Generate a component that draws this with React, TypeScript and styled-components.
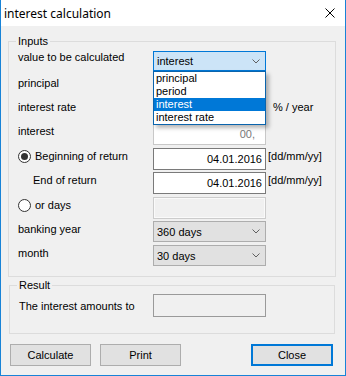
import React from "react";
import styled, { createGlobalStyle, css } from "styled-components";

const Global = createGlobalStyle`
  html, body { margin: 0; padding: 0; background: #f0f0f0; }
  body {
    font-family: "Liberation Sans", Arial, sans-serif;
    font-size: 11px;
    color: #000;
  }
  * { box-sizing: border-box; }
`;

const Window = styled.div`
  position: relative;
  width: 346px;
  height: 376px;
  border: 1px solid #1883d7;
  border-top: none;
  background: #f0f0f0;
  display: flex;
  flex-direction: column;
`;

const TitleBar = styled.div`
  height: 26px;
  flex: none;
  background: #fff;
  display: flex;
  align-items: center;
  justify-content: space-between;
  padding: 0 10px 0 3px;
  font-family: "Noto Sans", "Open Sans", sans-serif;
  font-size: 12px;
  color: #000;
`;

const Client = styled.div`
  flex: 1;
  display: flex;
  flex-direction: column;
  padding: 7px 9px 0 7px;
`;

const Group = styled.fieldset<{ $inset: number; $pt: number; $pb: number }>`
  margin: 0 ${(p) => p.$inset}px;
  padding: ${(p) => p.$pt}px 0 ${(p) => p.$pb}px 9px;
  border: 1px solid #dcdcdc;
  min-width: 0;
`;

const Legend = styled.legend`
  margin-left: -2px;
  padding: 0 2px;
  line-height: 16px;
  font-size: 11px;
`;

const Row = styled.div<{ $h: number; $center?: boolean; $label?: number }>`
  display: grid;
  grid-template-columns: ${(p) => p.$label ?? 135}px 113px auto;
  align-items: ${(p) => (p.$center ? "center" : "start")};
  height: ${(p) => p.$h}px;
`;

const Label = styled.div<{ $indent?: number }>`
  line-height: 16px;
  padding-left: ${(p) => p.$indent ?? 0}px;
  white-space: nowrap;
`;

const RadioLabel = styled.div`
  display: flex;
  align-items: center;
  gap: 4px;
  line-height: 16px;
  font-weight: normal;
  white-space: nowrap;
`;

const RadioDot = styled.span<{ $checked?: boolean }>`
  width: 13px;
  height: 13px;
  border-radius: 50%;
  border: 1px solid #333;
  background: #fff;
  display: flex;
  align-items: center;
  justify-content: center;
  &::after {
    content: "";
    width: 7px;
    height: 7px;
    border-radius: 50%;
    background: ${(p) => (p.$checked ? "#333" : "transparent")};
  }
`;

const Suffix = styled.div<{ $pad: number }>`
  padding-left: ${(p) => p.$pad}px;
  line-height: 16px;
  white-space: nowrap;
`;

type Tone = "normal" | "muted" | "disabled" | "readonly";

const Edit = styled.div<{ $tone: Tone; $h: number; $pr?: number }>`
  height: ${(p) => p.$h}px;
  line-height: ${(p) => p.$h - 2}px;
  text-align: right;
  padding-right: ${(p) => p.$pr ?? 3}px;
  border: 1px solid #7a7a7a;
  background: #fff;
  ${(p) =>
    p.$tone === "muted" &&
    css`
      border-color: #c8c8c8;
      color: #7a7a7a;
    `}
  ${(p) =>
    p.$tone === "disabled" &&
    css`
      border-color: #cccccc;
      background: #f0f0f0;
      box-shadow: inset 0 0 0 1px #fafafa;
    `}
  ${(p) =>
    p.$tone === "readonly" &&
    css`
      border-color: #9a9a9a;
      background: #f0f0f0;
    `}
`;

const ComboWrap = styled.div`
  position: relative;
  z-index: 2;
  margin-top: 2px;
`;

const Combo = styled.div<{ $focused?: boolean }>`
  height: ${(p) => (p.$focused ? 20 : 21)}px;
  display: flex;
  align-items: center;
  justify-content: space-between;
  padding: 0 5px 0 3px;
  border: 1px solid ${(p) => (p.$focused ? "#0078d7" : "#adadad")};
  background: ${(p) => (p.$focused ? "#cce4f7" : "#e1e1e1")};
`;

const DropList = styled.ul`
  position: absolute;
  top: 100%;
  left: 0;
  width: 113px;
  margin: 0;
  padding: 0;
  list-style: none;
  background: #fff;
  border: 1px solid #0a64ad;
  box-shadow: 3px 3px 4px rgba(0, 0, 0, 0.28);
`;

const DropItem = styled.li<{ $active?: boolean }>`
  height: 13px;
  line-height: 13px;
  padding-left: 2px;
  background: ${(p) => (p.$active ? "#0078d7" : "transparent")};
  color: ${(p) => (p.$active ? "#fff" : "#000")};
`;

const ButtonRow = styled.div`
  display: flex;
  gap: 9px;
  margin: 10px 3px 0 2px;
`;

const Button = styled.button<{ $default?: boolean }>`
  width: ${(p) => (p.$default ? 82 : 81)}px;
  height: 22px;
  padding: 0;
  font-family: "Liberation Sans", Arial, sans-serif;
  font-size: 11px;
  color: #000;
  background: #e1e1e1;
  border: ${(p) => (p.$default ? "2px solid #0078d7" : "1px solid #adadad")};
  ${(p) => p.$default && "margin-left: auto;"}
`;

const Chevron = () => (
  <svg width="8" height="5" viewBox="0 0 8 5">
    <polyline points="0.5,0.5 4,4 7.5,0.5" fill="none" stroke="#606060" strokeWidth="1" />
  </svg>
);

const CloseIcon = () => (
  <svg width="10" height="10" viewBox="0 0 10 10">
    <path d="M0.5 0.5 L9.5 9.5 M9.5 0.5 L0.5 9.5" stroke="#000" strokeWidth="1" />
  </svg>
);

const options = ["principal", "period", "interest", "interest rate"];

export default function App() {
  return (
    <>
      <Global />
      <Window>
        <TitleBar>
          <span>interest calculation</span>
          <CloseIcon />
        </TitleBar>
        <Client>
          <Group $inset={0} $pt={0} $pb={10}>
            <Legend>Inputs</Legend>
            <Row $h={26}>
              <Label>value to be calculated</Label>
              <ComboWrap>
                <Combo $focused>
                  <span>interest</span>
                  <Chevron />
                </Combo>
                <DropList>
                  {options.map((o) => (
                    <DropItem key={o} $active={o === "interest"}>
                      {o}
                    </DropItem>
                  ))}
                </DropList>
              </ComboWrap>
            </Row>
            <Row $h={24}>
              <Label>principal</Label>
              <Edit $tone="normal" $h={22} />
            </Row>
            <Row $h={24}>
              <Label>interest rate</Label>
              <Edit $tone="normal" $h={22} />
              <Suffix $pad={7}>% / year</Suffix>
            </Row>
            <Row $h={25}>
              <Label>interest</Label>
              <Edit $tone="muted" $h={22} $pr={10}>00,</Edit>
            </Row>
            <Row $h={24}>
              <RadioLabel>
                <RadioDot $checked />
                Beginning of return
              </RadioLabel>
              <Edit $tone="normal" $h={22}>04.01.2016</Edit>
              <Suffix $pad={2}>[dd/mm/yy]</Suffix>
            </Row>
            <Row $h={25}>
              <Label $indent={15}>End of return</Label>
              <Edit $tone="normal" $h={22}>04.01.2016</Edit>
              <Suffix $pad={2}>[dd/mm/yy]</Suffix>
            </Row>
            <Row $h={24}>
              <RadioLabel>
                <RadioDot />
                or days
              </RadioLabel>
              <Edit $tone="disabled" $h={22} />
            </Row>
            <Row $h={24}>
              <Label>banking year</Label>
              <Combo>
                <span>360 days</span>
                <Chevron />
              </Combo>
            </Row>
            <Row $h={21}>
              <Label>month</Label>
              <Combo>
                <span>30 days</span>
                <Chevron />
              </Combo>
            </Row>
          </Group>
          <Group $inset={1} $pt={1} $pb={16}>
            <Legend>Result</Legend>
            <Row $h={23} $center $label={134}>
              <Label>The interest amounts to</Label>
              <Edit $tone="readonly" $h={23} />
            </Row>
          </Group>
          <ButtonRow>
            <Button>Calculate</Button>
            <Button>Print</Button>
            <Button $default>Close</Button>
          </ButtonRow>
        </Client>
      </Window>
    </>
  );
}
